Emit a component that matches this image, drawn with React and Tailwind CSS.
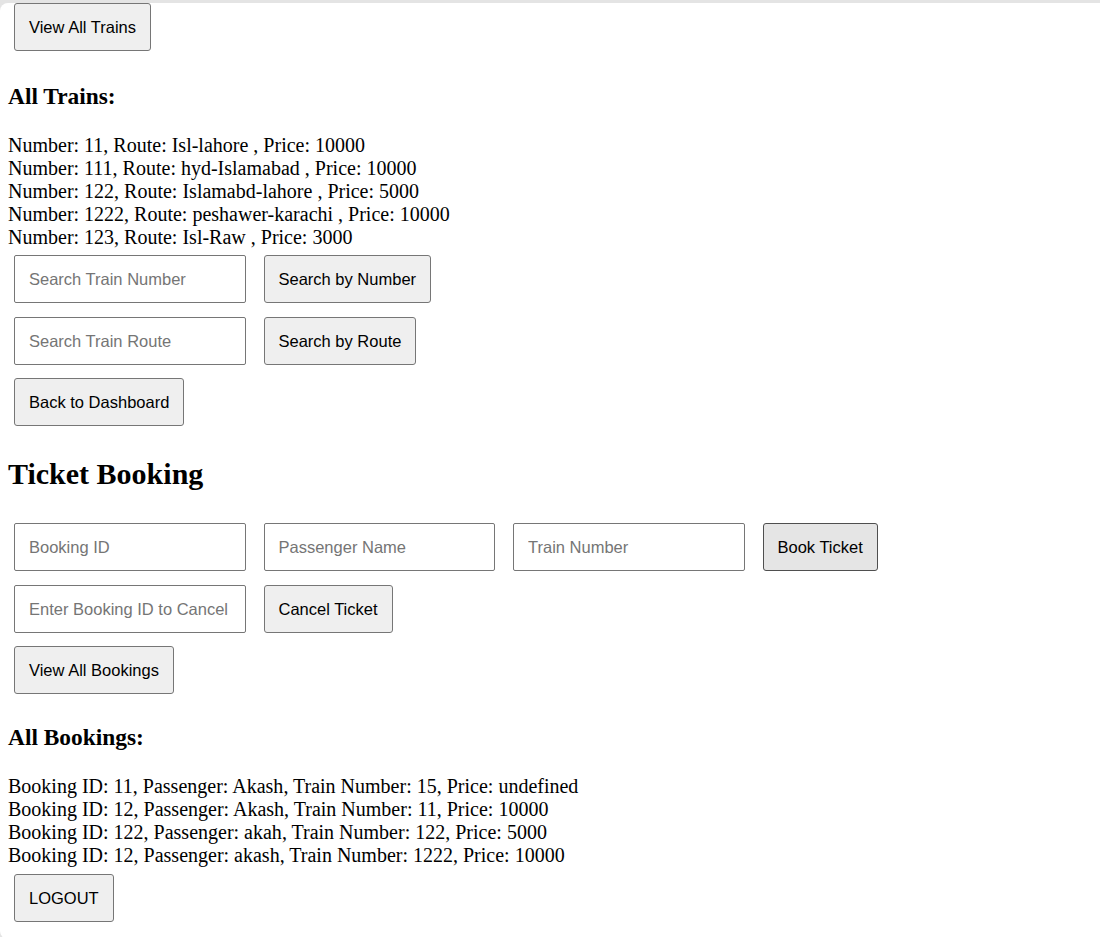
import React from "react";

const trains = [
  { number: 11, route: "Isl-lahore", price: 10000 },
  { number: 111, route: "hyd-Islamabad", price: 10000 },
  { number: 122, route: "Islamabd-lahore", price: 5000 },
  { number: 1222, route: "peshawer-karachi", price: 10000 },
  { number: 123, route: "Isl-Raw", price: 3000 },
];

const bookings = [
  { id: 11, passenger: "Akash", train: 15, price: "undefined" },
  { id: 12, passenger: "Akash", train: 11, price: 10000 },
  { id: 122, passenger: "akah", train: 122, price: 5000 },
  { id: 12, passenger: "akash", train: 1222, price: 10000 },
];

const Button = ({ children, hover = false }) => (
  <button
    type="button"
    className={`h-[48px] px-[14px] border rounded-[3px] text-[16.5px] leading-[18px] text-black font-['Liberation_Sans',Arial,sans-serif] whitespace-nowrap
      ${hover ? "bg-[#e5e5e5] border-[#4f4f4f]" : "bg-[#efefef] border-[#767676]"}`}
  >
    {children}
  </button>
);

const Input = ({ placeholder }) => (
  <input
    type="text"
    placeholder={placeholder}
    className="w-[231.5px] h-[48px] px-[14px] border border-[#767676] rounded-[2px] bg-white text-[16.5px] text-black font-['Liberation_Sans',Arial,sans-serif] placeholder:text-[#757575] outline-none"
  />
);

export default function App() {
  return (
    <div className="h-[937px] bg-[#e4e4e4] pt-px overflow-hidden">
      <div className="h-full bg-white rounded-tl-[8px] rounded-bl-[8px] pl-[8px] font-['Liberation_Serif','Times_New_Roman',serif] text-[20px] leading-[23px] text-black">
        <div className="ml-[6px] mt-[2px]">
          <Button>View All Trains</Button>
        </div>

        <h3 className="mt-[31.6px] text-[23.4px] leading-[27px] font-bold">All Trains:</h3>
        <div className="mt-[24px]">
          {trains.map((t) => (
            <div key={t.number}>
              Number: {t.number}, Route: {t.route} , Price: {t.price}
            </div>
          ))}
        </div>

        <div className="ml-[6px] mt-[6.5px] flex gap-[18px]">
          <Input placeholder="Search Train Number" />
          <Button>Search by Number</Button>
        </div>
        <div className="ml-[6px] mt-[14px] flex gap-[18px]">
          <Input placeholder="Search Train Route" />
          <Button>Search by Route</Button>
        </div>
        <div className="ml-[6px] mt-[13px]">
          <Button>Back to Dashboard</Button>
        </div>

        <h2 className="mt-[30.4px] text-[30px] leading-[35px] font-bold">Ticket Booking</h2>

        <div className="ml-[6px] mt-[31.6px] flex gap-[18px]">
          <Input placeholder="Booking ID" />
          <Input placeholder="Passenger Name" />
          <Input placeholder="Train Number" />
          <Button hover>Book Ticket</Button>
        </div>
        <div className="ml-[6px] mt-[14px] flex gap-[18px]">
          <Input placeholder="Enter Booking ID to Cancel" />
          <Button>Cancel Ticket</Button>
        </div>
        <div className="ml-[6px] mt-[13px]">
          <Button>View All Bookings</Button>
        </div>

        <h3 className="mt-[30.3px] text-[23.4px] leading-[27px] font-bold">All Bookings:</h3>
        <div className="mt-[23.7px]">
          {bookings.map((b, i) => (
            <div key={i}>
              Booking ID: {b.id}, Passenger: {b.passenger}, Train Number: {b.train}, Price: {b.price}
            </div>
          ))}
        </div>

        <div className="ml-[6px] mt-[7px]">
          <Button>LOGOUT</Button>
        </div>
      </div>
    </div>
  );
}
